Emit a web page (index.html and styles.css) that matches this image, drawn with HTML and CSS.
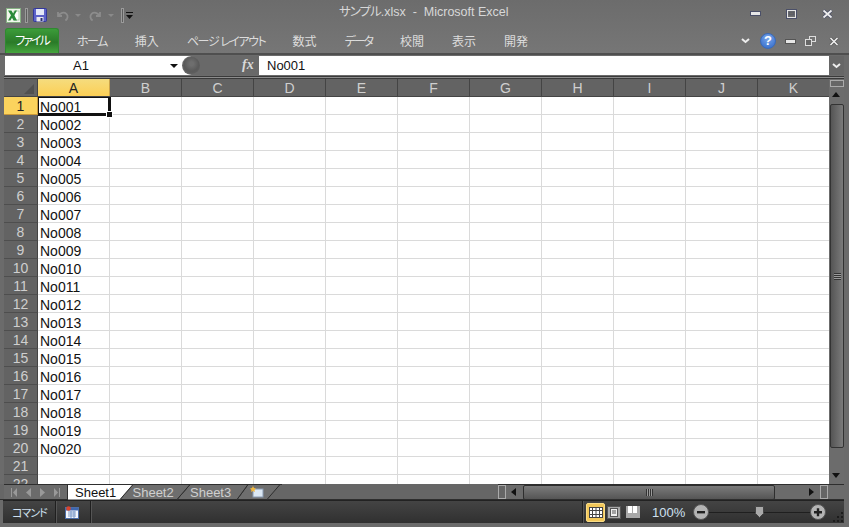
FILE: index.html
```html
<!DOCTYPE html>
<html lang="ja">
  <head>
    <meta charset="UTF-8" />
    <title>サンプル.xlsx - Microsoft Excel</title>
    <link rel="stylesheet" href="styles.css">
  </head>
  <body>
    <div class="window">
      <!-- title bar -->
      <div class="titlebar">
        <div class="qat">
          <svg class="xl-logo" width="15" height="15" viewBox="0 0 15 15">
            <rect x="0.500" y="0.500" width="14" height="14" fill="#f0f7ec" stroke="#86b083"/>
            <rect x="8" y="3" width="5" height="9" fill="#fff" stroke="#8fbc8f" stroke-width="0.700"/>
            <path d="M2 2.500h3.400l1.800 3 1.700-3h2.100L8.300 7.200l2.700 5.300H7.600L6 9.700l-1.600 2.800H2l3-5.300z" fill="#2a8a3a"/>
          </svg>
          <span class="qat-sep qat-sep-first"></span>
          <svg class="qat-save" width="14" height="14" viewBox="0 0 14 14">
            <rect x="0.500" y="0.500" width="13" height="13" rx="1" fill="#5c62c8" stroke="#34389a"/>
            <rect x="3" y="1" width="8" height="6" fill="#e4e8f8"/>
            <rect x="3.500" y="9" width="7" height="4.500" fill="#e8e8ee"/>
            <rect x="7.500" y="10" width="2" height="3" fill="#2a2f70"/>
          </svg>
          <svg class="qat-undo" width="13" height="13" viewBox="0 0 13 13">
            <path d="M2 3v4h4M2.500 7C4 3.600 8 2.600 10.400 4.800c2 2 1.400 5-1 6.700" fill="none" stroke="#8c8c8c" stroke-width="1.800"/>
          </svg>
          <span class="caret-dim caret-undo"></span>
          <svg class="qat-redo" width="13" height="13" viewBox="0 0 13 13">
            <path d="M11 3v4H7M10.500 7C9 3.600 5 2.600 2.600 4.800c-2 2-1.400 5 1 6.700" fill="none" stroke="#8c8c8c" stroke-width="1.800"/>
          </svg>
          <span class="caret-dim caret-redo"></span>
          <span class="qat-sep qat-sep-last"></span>
          <svg class="qat-menu" width="7" height="7" viewBox="0 0 7 7">
            <rect y="0" width="7" height="1" fill="#111"/>
            <path d="M0 3h7L3.500 7z" fill="#111"/>
          </svg>
        </div>
        <div class="doc-title"><span class="kana-title">サンプル</span>.xlsx&nbsp; -&nbsp; Microsoft Excel</div>
        <div class="win-buttons">
          <svg width="11" height="6" viewBox="0 0 11 6"><rect x="0.500" y="0.500" width="10" height="4" fill="#e6e6e6" stroke="#4a4f68"/></svg>
          <svg width="11" height="10" viewBox="0 0 11 10"><rect x="0.500" y="0.500" width="10" height="9" fill="none" stroke="#4a4f68"/><rect x="1.500" y="1.500" width="8" height="7" fill="none" stroke="#e6e6e6"/><rect x="3" y="3" width="5" height="3" fill="#666" stroke="#4a4f68" stroke-width="0.500"/></svg>
          <svg width="11" height="10" viewBox="0 0 11 10"><path d="M1.500 1.500l8 7M9.500 1.500l-8 7" stroke="#4a4f68" stroke-width="3.400"/><path d="M1.500 1.500l8 7M9.500 1.500l-8 7" stroke="#eee" stroke-width="1.800"/></svg>
        </div>
      </div>

      <!-- ribbon tabs -->
      <div class="ribbon">
        <div class="tab tab-file">ファイル</div>
        <div class="tab tab-home">ホーム</div>
        <div class="tab tab-insert">挿入</div>
        <div class="tab tab-layout">ページ レイアウト</div>
        <div class="tab tab-formula">数式</div>
        <div class="tab tab-data">データ</div>
        <div class="tab tab-review">校閲</div>
        <div class="tab tab-view">表示</div>
        <div class="tab tab-dev">開発</div>
        <div class="ribbon-right">
          <svg width="9" height="6" viewBox="0 0 9 6"><path d="M1 1l3.500 3L8 1" fill="none" stroke="#eee" stroke-width="2"/></svg>
          <span class="help">?</span>
          <svg class="rb-min" width="11" height="5" viewBox="0 0 11 5"><rect x="0.500" y="0.500" width="10" height="4" fill="#e6e6e6" stroke="#555"/></svg>
          <svg class="rb-restore" width="11" height="10" viewBox="0 0 11 10"><rect x="4.500" y="0.500" width="6" height="5" fill="none" stroke="#ddd"/><rect x="0.500" y="3.500" width="6" height="6" fill="#666" stroke="#ddd"/></svg>
          <svg class="rb-close" width="10" height="9" viewBox="0 0 10 9"><path d="M1.500 1l7 7M8.500 1l-7 7" stroke="#555" stroke-width="3"/><path d="M1.500 1l7 7M8.500 1l-7 7" stroke="#eee" stroke-width="1.600"/></svg>
        </div>
      </div>

      <!-- formula bar -->
      <div class="formula-bar">
        <div class="name-box">
          <span class="name-value">A1</span>
          <span class="name-caret"></span>
        </div>
        <div class="fx-area">
          <span class="fx-knob"></span>
          <span class="fx">fx</span>
        </div>
        <div class="formula-input">No001</div>
        <div class="formula-expand">
          <svg width="9" height="6" viewBox="0 0 9 6"><path d="M1 1l3.500 3L8 1" fill="none" stroke="#eee" stroke-width="2"/></svg>
        </div>
      </div>
      <div class="formula-strip"></div>

      <!-- sheet -->
      <div class="sheet-area">
        <div class="sheet">
          <div class="col-heads">
            <div class="corner"><span class="corner-mark"></span></div>
            <div class="col-head col-active">A</div>
            <div class="col-head">B</div>
            <div class="col-head">C</div>
            <div class="col-head">D</div>
            <div class="col-head">E</div>
            <div class="col-head">F</div>
            <div class="col-head">G</div>
            <div class="col-head">H</div>
            <div class="col-head">I</div>
            <div class="col-head">J</div>
            <div class="col-head">K</div>
          </div>
          <div class="rows">
            <div class="row"><div class="row-head row-active">1</div><div class="cell cell-active">No001<span class="fill-handle"></span></div></div>
            <div class="row"><div class="row-head">2</div><div class="cell">No002</div></div>
            <div class="row"><div class="row-head">3</div><div class="cell">No003</div></div>
            <div class="row"><div class="row-head">4</div><div class="cell">No004</div></div>
            <div class="row"><div class="row-head">5</div><div class="cell">No005</div></div>
            <div class="row"><div class="row-head">6</div><div class="cell">No006</div></div>
            <div class="row"><div class="row-head">7</div><div class="cell">No007</div></div>
            <div class="row"><div class="row-head">8</div><div class="cell">No008</div></div>
            <div class="row"><div class="row-head">9</div><div class="cell">No009</div></div>
            <div class="row"><div class="row-head">10</div><div class="cell">No010</div></div>
            <div class="row"><div class="row-head">11</div><div class="cell">No011</div></div>
            <div class="row"><div class="row-head">12</div><div class="cell">No012</div></div>
            <div class="row"><div class="row-head">13</div><div class="cell">No013</div></div>
            <div class="row"><div class="row-head">14</div><div class="cell">No014</div></div>
            <div class="row"><div class="row-head">15</div><div class="cell">No015</div></div>
            <div class="row"><div class="row-head">16</div><div class="cell">No016</div></div>
            <div class="row"><div class="row-head">17</div><div class="cell">No017</div></div>
            <div class="row"><div class="row-head">18</div><div class="cell">No018</div></div>
            <div class="row"><div class="row-head">19</div><div class="cell">No019</div></div>
            <div class="row"><div class="row-head">20</div><div class="cell">No020</div></div>
            <div class="row"><div class="row-head">21</div><div class="cell"></div></div>
            <div class="row"><div class="row-head">22</div><div class="cell"></div></div>
          </div>
        </div>
        <div class="vscroll">
          <span class="split-v"></span>
          <span class="arrow-up"></span>
          <div class="vthumb"><span class="grip-h"></span></div>
          <span class="arrow-down"></span>
        </div>
      </div>

      <!-- sheet tabs + horizontal scroll -->
      <div class="tabs-bar">
        <div class="sheet-nav">
          <svg width="6" height="9" viewBox="0 0 6 9"><rect width="1" height="9" fill="#999"/><path d="M6 0v9L2 4.500z" fill="#999"/></svg>
          <svg width="5" height="9" viewBox="0 0 5 9"><path d="M5 0v9L0 4.500z" fill="#999"/></svg>
          <svg width="5" height="9" viewBox="0 0 5 9"><path d="M0 0v9l5-4.500z" fill="#999"/></svg>
          <svg width="6" height="9" viewBox="0 0 6 9"><rect x="5" width="1" height="9" fill="#999"/><path d="M0 0v9l4-4.500z" fill="#999"/></svg>
        </div>
        <svg class="sheet-tabs" width="215" height="16" viewBox="0 0 215 16">
          <path d="M170 15.500l11-15h32l-13 15z" fill="#6e6e6e" stroke="#2e2e2e"/>
          <path d="M110 15.500l13-15h58l-11 15z" fill="#6e6e6e" stroke="#2e2e2e"/>
          <path d="M53 15.500l13-15h57l-13 15z" fill="#6e6e6e" stroke="#2e2e2e"/>
          <path d="M1 0.500h65l-13 15H1z" fill="#fff"/>
          <path d="M66 0.500l-13 15" fill="none" stroke="#2e2e2e"/>
          <path d="M0 0.500h215" fill="none" stroke="#2e2e2e"/>
        </svg>
        <div class="tab-labels">
          <span class="sheet-tab sheet-tab-on">Sheet1</span>
          <span class="sheet-tab">Sheet2</span>
          <span class="sheet-tab">Sheet3</span>
          <svg class="new-sheet" width="14" height="12" viewBox="0 0 14 12">
            <rect x="3" y="3" width="10" height="8" fill="#dce8f4" stroke="#8a9cb4"/>
            <path d="M3 0l1 2 2 .5-1.500 1.500.5 2-2-1-2 1 .5-2L0 2.500 2 2z" fill="#f0b840"/>
          </svg>
        </div>
        <div class="hscroll">
          <span class="split-h"></span>
          <span class="arrow-left"></span>
          <div class="hthumb"><span class="grip-v"></span></div>
          <span class="arrow-right"></span>
          <span class="split-h"></span>
        </div>
      </div>

      <!-- status bar -->
      <div class="statusbar">
        <span class="status-text">コマンド</span>
        <span class="status-div"></span>
        <svg class="status-macro" width="14" height="13" viewBox="0 0 14 13">
          <rect x="0.500" y="1.500" width="13" height="11" fill="#f4f6fb" stroke="#4c6ea8"/>
          <rect x="1" y="2" width="12" height="2.500" fill="#3e67b0"/>
          <path d="M3 6h8M3 8h8M3 10h8M6 5v7M9 5v7" stroke="#7d9ac8" stroke-width="1"/>
          <circle cx="3.500" cy="2.500" r="2.300" fill="#d8442e"/>
        </svg>
        <span class="status-div"></span>
        <span class="status-spacer"></span>
        <span class="status-div"></span>
        <div class="views">
          <span class="view view-on">
            <svg width="14" height="11" viewBox="0 0 14 11"><rect x="0.500" y="0.500" width="13" height="10" fill="#fff" stroke="#444"/><path d="M0 3.500h14M0 7.500h14M3.500 0v11M7 0v11M10.500 0v11" stroke="#444"/></svg>
          </span>
          <span class="view view-page">
            <svg width="14" height="13" viewBox="0 0 14 13"><rect x="0.500" y="0.500" width="13" height="12" fill="#a8a8a8" stroke="#555"/><rect x="3.500" y="2.500" width="7" height="8" fill="#eee" stroke="#555"/><path d="M5 5h4M5 7h4" stroke="#555"/></svg>
          </span>
          <span class="view view-break">
            <svg width="14" height="12" viewBox="0 0 14 12"><rect width="14" height="12" fill="#a8a8a8"/><rect x="2" y="0" width="4" height="7" fill="#fff"/><rect x="7" y="0" width="4" height="7" fill="#fff"/></svg>
          </span>
        </div>
        <span class="zoom-pct">100%</span>
        <div class="zoom-slider">
          <svg class="zoom-btn" width="16" height="16" viewBox="0 0 16 16"><circle cx="8" cy="8" r="7.500" fill="#b4b4b4" stroke="#555"/><rect x="4" y="7" width="8" height="2.400" fill="#222"/></svg>
          <div class="zoom-track">
            <svg class="zoom-thumb" width="9" height="12" viewBox="0 0 9 12"><path d="M0.500 0.500h8v7l-4 4-4-4z" fill="#a9a9a9" stroke="#444"/></svg>
          </div>
          <svg class="zoom-btn" width="16" height="16" viewBox="0 0 16 16"><circle cx="8" cy="8" r="7.500" fill="#b4b4b4" stroke="#555"/><path d="M4 8.200h8M8 4.200v8" stroke="#222" stroke-width="2.400"/></svg>
        </div>
        <svg class="resize-grip" width="12" height="12" viewBox="0 0 12 12">
          <path d="M9 1h2v2H9zM5 5h2v2H5zM9 5h2v2H9zM1 9h2v2H1zM5 9h2v2H5zM9 9h2v2H9z" fill="#1c1c1c"/>
        </svg>
      </div>
    </div>
  </body>
</html>
```

FILE: styles.css
```css
* {
  box-sizing: border-box;
}
html,
body {
  margin: 0;
  height: 100%;
}
body {
  background-color: #6b6b6b;
  overflow: hidden;
  font-family: "Liberation Sans", "Noto Sans CJK JP", sans-serif;
  font-feature-settings: "palt";
}
.window {
  width: 849px;
  height: 527px;
  display: flex;
  flex-direction: column;
  background: linear-gradient(#6c6c6c, #767676 53px, #6b6b6b 55px);
}

/* title bar */
.titlebar {
  height: 27px;
  display: flex;
  align-items: center;
  position: relative;
  padding: 3px 0 0 6px;
  flex: none;
}
.qat {
  display: flex;
  align-items: center;
}
.qat-sep {
  width: 3px;
  height: 15px;
  border: 1px solid #9a9a9a;
  background: #5e5e5e;
}
.qat-sep-first {
  margin-left: 4px;
}
.qat-save {
  margin-left: 5px;
}
.qat-undo {
  margin-left: 9px;
}
.qat-redo {
  margin-left: 8px;
}
.caret-dim {
  width: 0;
  height: 0;
  border: 3px solid transparent;
  border-top: 3px solid #8a8a8a;
  border-bottom: 0;
}
.caret-undo,
.caret-redo {
  margin-left: 6px;
}
.qat-sep-last {
  margin-left: 7px;
}
.qat-menu {
  margin-left: 2px;
}
.doc-title {
  position: absolute;
  left: 339px;
  top: 3px;
  font-size: 12.500px;
  line-height: 18px;
  color: #d8d8d8;
  white-space: nowrap;
}
.kana-title {
  letter-spacing: -1px;
}
.win-buttons {
  display: flex;
  align-items: center;
  gap: 25px;
  position: absolute;
  right: 16px;
  top: 9px;
}

/* ribbon tabs */
.ribbon {
  height: 28px;
  display: flex;
  flex: none;
  align-items: center;
  padding: 1px 0 0 5px;
  border-bottom: 2px solid #4f4f4f;
  position: relative;
}
.tab {
  font-size: 12px;
  color: #dcdcdc;
  white-space: nowrap;
}
.tab-file {
  width: 54px;
  height: 25px;
  line-height: 24px;
  text-align: center;
  color: #fff;
  letter-spacing: -2px;
  border: 1px solid #2f8a30;
  border-bottom: 0;
  border-radius: 3px 3px 0 0;
  background: linear-gradient(#3c9c3a, #2a7a28 55%, #46a63e);
}
.tab-home {
  margin-left: 18px;
  letter-spacing: -1.500px;
}
.tab-insert {
  margin-left: 28px;
}
.tab-layout {
  margin-left: 28px;
  letter-spacing: -1.400px;
}
.tab-formula {
  margin-left: 27px;
}
.tab-data {
  margin-left: 28px;
  letter-spacing: -2px;
}
.tab-review {
  margin-left: 28px;
}
.tab-view {
  margin-left: 28px;
}
.tab-dev {
  margin-left: 28px;
}
.ribbon-right {
  position: absolute;
  right: 10px;
  top: 5px;
  height: 18px;
  display: flex;
  align-items: center;
}
.help {
  width: 16px;
  height: 16px;
  border-radius: 50%;
  margin-left: 10px;
  background: radial-gradient(circle at 50% 30%, #7aa6ea, #2f68c8);
  border: 1px solid #3a6ab8;
  color: #fff;
  font-size: 13px;
  font-weight: bold;
  line-height: 14px;
  text-align: center;
}
.rb-min {
  margin-left: 9px;
}
.rb-restore {
  margin-left: 9px;
}
.rb-close {
  margin-left: 13px;
}

/* formula bar */
.formula-bar {
  height: 21px;
  flex: none;
  display: flex;
  padding: 1px 5px 1px 5px;
  background: #fff content-box;
  border-top: 0;
}
.name-box {
  width: 177px;
  background: #fff;
  display: flex;
  align-items: center;
  font-size: 13px;
  color: #111;
}
.name-value {
  flex: 1;
  text-align: center;
  padding-right: 13px;
}
.name-caret {
  width: 0;
  height: 0;
  margin-right: 4px;
  border: 4px solid transparent;
  border-top: 4px solid #111;
  border-bottom: 0;
}
.fx-area {
  width: 77px;
  position: relative;
  background: #696969;
  border-radius: 10px 0 0 10px;
}
.fx-knob {
  position: absolute;
  left: 1px;
  top: 1px;
  width: 17px;
  height: 17px;
  border-radius: 50%;
  background: radial-gradient(circle at 50% 40%, #6e6e6e 15%, #5a5a5a 55%, #646464);
}
.fx {
  position: absolute;
  left: 60px;
  top: 0;
  font-family: "Liberation Serif", serif;
  font-style: italic;
  font-weight: bold;
  font-size: 14px;
  line-height: 18px;
  color: #d8d8d8;
}
.formula-input {
  flex: 1;
  background: #fff;
  font-size: 13px;
  line-height: 20px;
  padding-left: 8px;
  color: #111;
}
.formula-expand {
  width: 15px;
  display: flex;
  align-items: center;
  justify-content: center;
  background: #666;
}
.formula-strip {
  height: 3px;
  flex: none;
  margin-left: 4px;
  margin-right: 5px;
  background: #8c8c8c;
  border-top: 1px solid #3a3a3a;
  border-bottom: 1px solid #3a3a3a;
}

/* sheet */
.sheet-area {
  flex: none;
  height: 405px;
  display: flex;
  padding: 0 5px 0 4px;
}
.sheet {
  flex: 1;
  min-width: 0;
  overflow: hidden;
  background: #fff;
}
.col-heads {
  height: 18px;
  display: flex;
  background: #636363;
  border-bottom: 1px solid #444;
}
.corner {
  width: 34px;
  flex: none;
  position: relative;
  border-right: 1px solid #444;
}
.corner-mark {
  position: absolute;
  right: 3px;
  bottom: 2px;
  width: 0;
  height: 0;
  border-style: solid;
  border-width: 0 0 10px 10px;
  border-color: transparent transparent #505050 transparent;
}
.col-head {
  width: 72px;
  flex: none;
  font-size: 14px;
  line-height: 18px;
  text-align: center;
  color: #cfcfcf;
  border-right: 1px solid #444;
}
.col-active {
  background: linear-gradient(#f5dc7e, #fccf55);
  color: #222;
  border-right-color: #c9a24a;
}
.rows {
  background-color: #fff;
  background-image:
    repeating-linear-gradient(to right, transparent 0 71px, #dadada 71px 72px),
    repeating-linear-gradient(to bottom, transparent 0 17px, #dadada 17px 18px);
  background-position: 34px 0, 0 0;
}
.row {
  height: 18px;
  display: flex;
}
.row-head {
  width: 34px;
  height: 18px;
  flex: none;
  font-size: 14px;
  line-height: 19px;
  text-align: center;
  color: #cfcfcf;
  background: #636363;
  border-right: 1px solid #444;
  border-bottom: 1px solid #4e4e4e;
}
.row-active {
  background: #fbd35d;
  color: #222;
  border-right-color: #c9983a;
  border-bottom-color: #c9983a;
}
.cell {
  width: 72px;
  height: 18px;
  flex: none;
  font-size: 14px;
  line-height: 20px;
  padding-left: 2px;
  color: #111;
  position: relative;
  white-space: nowrap;
}
.cell-active {
  width: 73px;
  height: 19px;
  padding-left: 1px;
  line-height: 18px;
  border: 1px solid #111;
  border-right-width: 3px;
  border-bottom-width: 3px;
}
.fill-handle {
  position: absolute;
  right: -5px;
  bottom: -5px;
  width: 7px;
  height: 7px;
  background: #111;
  border: 1px solid #fff;
}
.vscroll {
  width: 15px;
  flex: none;
  position: relative;
  background: #6c6c6c;
}
.split-v {
  position: absolute;
  left: 1px;
  top: 1px;
  width: 14px;
  height: 7px;
  border: 1px solid #aaa;
  background: #666;
}
.arrow-up {
  position: absolute;
  left: 3px;
  top: 13px;
  width: 0;
  height: 0;
  border: 4.500px solid transparent;
  border-bottom: 5px solid #111;
  border-top: 0;
}
.vthumb {
  position: absolute;
  left: 1px;
  top: 25px;
  width: 14px;
  height: 344px;
  border: 1px solid #333;
  border-radius: 2px;
  background: linear-gradient(to right, #555, #7b7b7b);
  display: flex;
  align-items: center;
  justify-content: center;
}
.grip-h {
  width: 7px;
  height: 7px;
  background: repeating-linear-gradient(to bottom, #333 0 1px, #9a9a9a 1px 2px);
}
.arrow-down {
  position: absolute;
  left: 3px;
  bottom: 6px;
  width: 0;
  height: 0;
  border: 4.500px solid transparent;
  border-top: 5px solid #111;
  border-bottom: 0;
}

/* sheet tabs */
.tabs-bar {
  height: 16px;
  flex: none;
  display: flex;
  position: relative;
  padding-left: 4px;
  margin-right: 5px;
  background: #666;
  border-bottom: 1px solid #2e2e2e;
}
.sheet-nav {
  width: 64px;
  flex: none;
  display: flex;
  align-items: center;
  gap: 9px;
  padding-left: 7px;
  border-top: 1px solid #2e2e2e;
  border-right: 1px solid #2e2e2e;
  background: #6b6b6b;
}
.sheet-tabs {
  position: absolute;
  left: 67px;
  top: 0;
}
.tab-labels {
  position: absolute;
  left: 75px;
  top: 0;
  display: flex;
  font-size: 13px;
  line-height: 17px;
  color: #cfcfcf;
}
.sheet-tab {
  width: 57.500px;
}
.sheet-tab-on {
  color: #111;
}
.new-sheet {
  margin: 2px 0 0 2px;
}
.hscroll {
  position: absolute;
  left: 498px;
  top: 0;
  width: 346px;
  height: 15px;
  display: flex;
  align-items: center;
  border-top: 1px solid #2e2e2e;
  background: #6b6b6b;
}
.split-h {
  width: 8px;
  height: 14px;
  flex: none;
  border: 1px solid #aaa;
  background: #666;
}
.arrow-left {
  width: 0;
  height: 0;
  margin: 0 7px 0 5px;
  border: 4.500px solid transparent;
  border-right: 5px solid #111;
  border-left: 0;
}
.hthumb {
  width: 252px;
  height: 15px;
  flex: none;
  border: 1px solid #2e2e2e;
  border-radius: 2px;
  background: linear-gradient(#7b7b7b, #555);
  display: flex;
  align-items: center;
  justify-content: center;
}
.grip-v {
  width: 7px;
  height: 7px;
  background: repeating-linear-gradient(to right, #333 0 1px, #9a9a9a 1px 2px);
}
.arrow-right {
  width: 0;
  height: 0;
  margin-left: 34px;
  margin-right: 6px;
  border: 4.500px solid transparent;
  border-left: 5px solid #111;
  border-right: 0;
}

/* status bar */
.statusbar {
  height: 23px;
  flex: none;
  margin: 0 5px 0 3px;
  display: flex;
  align-items: center;
  background: linear-gradient(#444, #303030);
  border-top: 1px solid #222;
  color: #cfe0f0;
}
.status-text {
  font-size: 11px;
  letter-spacing: -1px;
  padding-left: 9px;
  width: 52px;
  white-space: nowrap;
}
.status-div {
  width: 2px;
  height: 22px;
  flex: none;
  background: #1f1f1f;
  border-right: 1px solid #555;
}
.status-macro {
  margin: 0 11px 0 8px;
}
.status-spacer {
  flex: 1;
}
.views {
  display: flex;
  align-items: center;
  margin-left: 2px;
}
.view {
  display: flex;
  align-items: center;
  justify-content: center;
}
.view-on {
  width: 19px;
  height: 19px;
  background: #f3c85a;
  border: 1px solid #f9dd88;
  border-radius: 2px;
}
.view-page {
  margin-left: 2px;
}
.view-break {
  margin-left: 5px;
}
.zoom-pct {
  font-size: 13px;
  margin-left: 12px;
  width: 41px;
}
.zoom-slider {
  display: flex;
  align-items: center;
}
.zoom-track {
  width: 101px;
  height: 1px;
  background: #1f1f1f;
  position: relative;
}
.zoom-thumb {
  position: absolute;
  left: 46px;
  top: -6px;
}
.resize-grip {
  margin-left: 6px;
  margin-top: 9px;
}
```
